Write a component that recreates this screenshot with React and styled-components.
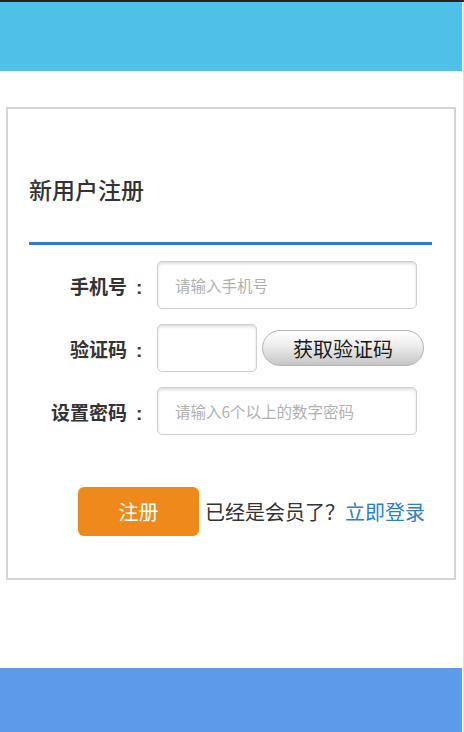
import React from "react";
import styled, { createGlobalStyle } from "styled-components";

const Global = createGlobalStyle`
  html, body { margin: 0; padding: 0; background: #fff; }
  body { font-family: "Noto Sans CJK SC", "Noto Sans", sans-serif; }
  * { box-sizing: border-box; }
`;

const Page = styled.div`
  width: 464px;
  min-height: 732px;
  display: flex;
  flex-direction: column;
  border-top: 2px solid #222;
`;

const Frame = styled.div`
  width: 464px;
  flex: 1;
  display: flex;
  flex-direction: column;
  border-right: 1px solid #d6e6d6;
  padding-right: 1px;
`;

const Header = styled.div`
  height: 69px;
  background: #4fc0e8;
`;

const Card = styled.div`
  margin: 36px 0 0 6px;
  width: 450px;
  border: 2px solid #d4d4d4;
  padding: 65px 22px 42px 21px;
  display: flex;
  flex-direction: column;
`;

const Title = styled.h1`
  margin: 0;
  font-size: 23px;
  line-height: 30px;
  font-weight: 500;
  color: #333;
`;

const Rule = styled.div`
  margin-top: 38px;
  height: 3px;
  background: #2a7fc6;
`;

const Form = styled.div`
  margin-top: 16px;
  display: grid;
  grid-template-columns: 114px 1fr;
  column-gap: 14px;
  row-gap: 15px;
  align-items: center;
`;

const Label = styled.label`
  text-align: right;
  font-size: 19px;
  font-weight: 700;
  color: #333;
  white-space: nowrap;
`;

const Colon = styled.span`
  display: inline-block;
  margin-left: 9px;
  width: 7px;
  text-align: left;
  font-family: "Liberation Sans", sans-serif;
`;

const Input = styled.input`
  width: ${(p) => p.$w}px;
  height: 48px;
  border: 1px solid #cfcfcf;
  border-radius: 5px;
  padding: 0 0 0 17px;
  font-family: inherit;
  font-size: 15.5px;
  color: #333;
  background: #fff;
  box-shadow: inset 0 2px 3px rgba(0, 0, 0, 0.13);
  outline: none;
  &::placeholder { color: #b0b0b0; }
`;

const CodeGroup = styled.div`
  display: flex;
  align-items: center;
  gap: 5px;
`;

const CodeButton = styled.button`
  width: 162px;
  height: 36px;
  border-radius: 18px;
  border: 1px solid #b4b4b4;
  background: linear-gradient(to bottom, #ffffff 0%, #ececec 45%, #c6c6c6 100%);
  font-family: inherit;
  font-size: 20px;
  color: #1a1a1a;
  padding: 0;
  cursor: pointer;
`;

const Actions = styled.div`
  margin-top: 52px;
  margin-left: 49px;
  display: flex;
  align-items: center;
  gap: 6px;
`;

const Submit = styled.button`
  width: 121px;
  height: 49px;
  border: none;
  border-radius: 6px;
  background: #f0891b;
  color: #fff;
  font-family: inherit;
  font-size: 20px;
  padding: 0;
  cursor: pointer;
`;

const Hint = styled.span`
  font-size: 20px;
  color: #333;
  white-space: nowrap;
`;

const Link = styled.a`
  color: #2a7fc6;
  text-decoration: none;
`;

const Footer = styled.div`
  margin-top: 88px;
  flex: 1;
  min-height: 64px;
  background: #5c9be8;
`;

const fields = [
  { label: "手机号" },
  { label: "验证码" },
  { label: "设置密码" },
];

export default function App() {
  return (
    <>
      <Global />
      <Page>
        <Frame>
          <Header />
          <Card>
            <Title>新用户注册</Title>
            <Rule />
            <Form>
              <Label>
                {fields[0].label}
                <Colon>:</Colon>
              </Label>
              <Input $w={260} placeholder="请输入手机号" />
              <Label>
                {fields[1].label}
                <Colon>:</Colon>
              </Label>
              <CodeGroup>
                <Input $w={100} />
                <CodeButton>获取验证码</CodeButton>
              </CodeGroup>
              <Label>
                {fields[2].label}
                <Colon>:</Colon>
              </Label>
              <Input $w={260} type="password" placeholder="请输入6个以上的数字密码" />
            </Form>
            <Actions>
              <Submit>注册</Submit>
              <Hint>
                已经是会员了？<Link href="#">立即登录</Link>
              </Hint>
            </Actions>
          </Card>
          <Footer />
        </Frame>
      </Page>
    </>
  );
}
